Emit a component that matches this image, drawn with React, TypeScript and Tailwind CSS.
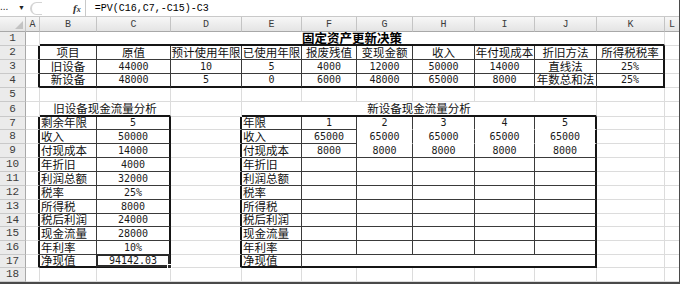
import React from 'react';

type Cell = { t?: string; span?: number; align?: 'l' | 'c'; bold?: boolean; sel?: boolean };
type Line = 'thick' | 'thin' | 'grid' | 'none';

const COLS = ['A', 'B', 'C', 'D', 'E', 'F', 'G', 'H', 'I', 'J', 'K', 'L'];

const tables = [
  { r1: 2, r2: 4, c1: 2, c2: 11 },
  { r1: 7, r2: 17, c1: 2, c2: 3 },
  { r1: 7, r2: 17, c1: 5, c2: 10 },
];

function lineV(r: number, c: number): Line {
  let res: Line = 'grid';
  for (const t of tables) {
    if (r < t.r1 || r > t.r2) continue;
    if (c === t.c1 - 1 || c === t.c2) return 'thick';
    if (c >= t.c1 && c < t.c2) res = 'thin';
  }
  return res;
}

function lineH(r: number, c: number): Line {
  if ((r === 7 || r === 8) && c >= 7 && c <= 10) return 'none';
  let res: Line = 'grid';
  for (const t of tables) {
    if (c < t.c1 || c > t.c2) continue;
    if (r === t.r1 - 1 || r === t.r2) return 'thick';
    if (r >= t.r1 && r < t.r2) res = 'thin';
  }
  return res;
}

const V_CLASS: Record<Line, string> = {
  thick: 'border-r-2 border-r-[#151515]',
  thin: 'border-r border-r-[#3a3a3a]',
  grid: 'border-r border-r-[#dcdcdc]',
  none: 'border-r border-r-white',
};
const H_CLASS: Record<Line, string> = {
  thick: 'border-b-2 border-b-[#151515]',
  thin: 'border-b border-b-[#3a3a3a]',
  grid: 'border-b border-b-[#dcdcdc]',
  none: 'border-b border-b-white',
};

const content: Record<string, Cell> = {};
const covered = new Set<string>();
function set(r: number, c: number, cell: Cell) {
  content[`${r}-${c}`] = cell;
  if (cell.span) for (let k = 1; k < cell.span; k++) covered.add(`${r}-${c + k}`);
}

set(1, 2, { t: '固定资产更新决策', span: 10, bold: true });
const row2 = ['项目', '原值', '预计使用年限', '已使用年限', '报废残值', '变现金额', '收入', '年付现成本', '折旧方法', '所得税税率'];
const row3 = ['旧设备', '44000', '10', '5', '4000', '12000', '50000', '14000', '直线法', '25%'];
const row4 = ['新设备', '48000', '5', '0', '6000', '48000', '65000', '8000', '年数总和法', '25%'];
[row2, row3, row4].forEach((row, i) => row.forEach((t, j) => set(2 + i, 2 + j, { t })));

set(6, 2, { t: '旧设备现金流量分析', span: 2 });
set(6, 5, { t: '新设备现金流量分析', span: 6 });

const labels = ['剩余年限', '收入', '付现成本', '年折旧', '利润总额', '税率', '所得税', '税后利润', '现金流量', '年利率', '净现值'];
const oldVals = ['5', '50000', '14000', '4000', '32000', '25%', '8000', '24000', '28000', '10%', '94142.03'];
labels.forEach((l, i) => {
  set(7 + i, 2, { t: l, align: 'l' });
  set(7 + i, 3, { t: oldVals[i], sel: i === 10 });
  set(7 + i, 5, { t: i === 0 ? '年限' : l, align: 'l' });
});
for (let k = 0; k < 5; k++) {
  set(7, 6 + k, { t: String(k + 1) });
  set(8, 6 + k, { t: '65000' });
  set(9, 6 + k, { t: '8000' });
}
set(17, 6, { span: 5 });

const isNum = (t?: string) => !!t && /^[\d.%]+$/.test(t);

function SheetCell({ r, c }: { r: number; c: number }) {
  const cell = content[`${r}-${c}`] || {};
  const endC = c + (cell.span || 1) - 1;
  const v = V_CLASS[lineV(r, endC)];
  const h = H_CLASS[lineH(r, c)];
  const align = cell.align === 'l' ? 'justify-start pl-[1px]' : 'justify-center';
  const font = cell.bold
    ? "font-['Noto_Sans_CJK_SC',sans-serif] text-[12.5px] font-bold text-black"
    : isNum(cell.t)
    ? "font-['DejaVu_Sans_Mono','Liberation_Mono',monospace] text-[10px] text-[#1a1a1a]"
    : "font-['Noto_Sans_CJK_SC',sans-serif] text-[11.5px] text-[#111]";
  return (
    <div
      className={`relative flex items-center whitespace-nowrap leading-none bg-white ${v} ${h} ${align} ${font}`}
      style={cell.span ? { gridColumn: `span ${cell.span}` } : undefined}
    >
      {cell.t}
      {cell.sel && (
        <>
          <div className="pointer-events-none absolute -left-[1px] -top-[1px] -right-[1px] -bottom-[1px] z-10 border-2 border-[#2b2b2b]" />
          <div className="absolute -right-[3px] -bottom-[3px] z-20 h-[5px] w-[5px] border border-white bg-[#2b2b2b]" />
        </>
      )}
    </div>
  );
}

export default function App() {
  const rows = Array.from({ length: 18 }, (_, i) => i + 1);
  return (
    <div className="h-[284px] w-[680px] overflow-hidden bg-white border-r border-b-2 border-[#4a4a4a] flex flex-col">
      {/* formula bar */}
      <div className="flex h-[17px] shrink-0 items-center border-b border-[#c9c9c9] bg-white">
        <div className="flex w-[28px] items-center justify-between pr-[3px] font-['Liberation_Sans',sans-serif] text-[10px] text-[#222]">
          <span className="-mt-[3px]">...</span>
          <span className="text-[7px]">▼</span>
        </div>
        <div className="ml-[2px] h-[13px] w-[12px] rounded-l-full border-l-2 border-t border-b border-[#d4d4d4]" />
        <div className="ml-[31px] font-['Liberation_Serif',serif] text-[11px] font-bold italic text-[#333]">
          f<span className="text-[8px]">x</span>
        </div>
        <div className="ml-[4px] h-[17px] w-px bg-[#c9c9c9]" />
        <div className="ml-[9px] font-['Liberation_Mono',monospace] text-[10px] text-black">=PV(C16,C7,-C15)-C3</div>
      </div>
      {/* sheet */}
      <div className="grid grid-cols-[26px_14px_57px_74px_71px_60px_55px_56px_62px_60px_62px_68px_15px] grid-rows-[15px_14px_14px_14px_14px_14px_15px_13px_14px_14px_14px_14px_14px_14px_13px_14px_14px_13px_14px]">
        <div className="relative border-r border-b border-r-[#c4c4c4] border-b-[#a8a8a8] bg-gradient-to-b from-[#f7f7f7] to-[#e4e4e4]">
          <svg className="absolute right-[2px] bottom-[2px]" width="8" height="8" viewBox="0 0 8 8">
            <polygon points="8,0 8,8 0,8" fill="#c3c3c3" />
          </svg>
        </div>
        {COLS.map((l) => (
          <div
            key={l}
            className="flex items-center justify-center border-r border-b border-r-[#c4c4c4] border-b-[#a8a8a8] bg-gradient-to-b from-[#f7f7f7] to-[#e4e4e4] font-['Liberation_Mono',monospace] text-[10px] text-[#3c3c3c]"
          >
            {l}
          </div>
        ))}
        {rows.map((r) => (
          <React.Fragment key={r}>
            <div className="flex items-center justify-center border-r border-b border-r-[#a8a8a8] border-b-[#c9c9c9] bg-[#ebebeb] font-['Liberation_Mono',monospace] text-[11px] text-[#3c3c3c]">
              {r}
            </div>
            {COLS.map((_, i) => {
              const c = i + 1;
              if (covered.has(`${r}-${c}`)) return null;
              return <SheetCell key={c} r={r} c={c} />;
            })}
          </React.Fragment>
        ))}
      </div>
    </div>
  );
}
